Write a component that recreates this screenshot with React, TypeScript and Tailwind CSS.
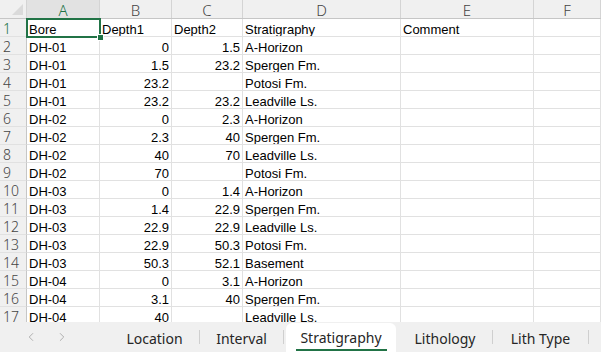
import { ChevronLeft, ChevronRight } from 'lucide-react'

type Row = [string, string, string, string]

const rows: Row[] = [
  ['DH-01', '0', '1.5', 'A-Horizon'],
  ['DH-01', '1.5', '23.2', 'Spergen Fm.'],
  ['DH-01', '23.2', '', 'Potosi Fm.'],
  ['DH-01', '23.2', '23.2', 'Leadville Ls.'],
  ['DH-02', '0', '2.3', 'A-Horizon'],
  ['DH-02', '2.3', '40', 'Spergen Fm.'],
  ['DH-02', '40', '70', 'Leadville Ls.'],
  ['DH-02', '70', '', 'Potosi Fm.'],
  ['DH-03', '0', '1.4', 'A-Horizon'],
  ['DH-03', '1.4', '22.9', 'Spergen Fm.'],
  ['DH-03', '22.9', '22.9', 'Leadville Ls.'],
  ['DH-03', '22.9', '50.3', 'Potosi Fm.'],
  ['DH-03', '50.3', '52.1', 'Basement'],
  ['DH-04', '0', '3.1', 'A-Horizon'],
  ['DH-04', '3.1', '40', 'Spergen Fm.'],
  ['DH-04', '40', '', 'Leadville Ls.'],
]

const cols = [
  { name: 'A', w: 'w-[73px]' },
  { name: 'B', w: 'w-[72px]' },
  { name: 'C', w: 'w-[71px]' },
  { name: 'D', w: 'w-[158px]' },
  { name: 'E', w: 'w-[133px]' },
  { name: 'F', w: 'w-[67px]' },
]

const tabs = [
  { name: 'Location', w: 'w-[89px]' },
  { name: 'Interval', w: 'w-[83px]' },
  { name: 'Stratigraphy', w: 'w-[110px]', active: true },
  { name: 'Lithology', w: 'w-[94px]' },
  { name: 'Lith Type', w: 'w-[95px]' },
]

const cell = 'h-[18px] shrink-0 border-r border-b border-[#e1e1e1] px-[2px] leading-[21px] overflow-hidden whitespace-nowrap'

export default function App() {
  const header = ['Bore', 'Depth1', 'Depth2', 'Stratigraphy', 'Comment', '']

  return (
    <div className="w-[601px] h-[352px] overflow-hidden bg-white flex flex-col font-['Liberation_Sans',sans-serif] text-[13px] text-black">
      {/* Grid */}
      <div className="relative h-[322px] overflow-hidden">
        {/* Column headers */}
        <div className="flex h-[19px] bg-[#f0f0f0] border-b border-[#c6c6c6]">
          <div className="w-[27px] shrink-0 border-r border-[#d4d4d4] relative">
            <div className="absolute right-[3px] bottom-[3px] w-0 h-0 border-l-[11px] border-l-transparent border-b-[11px] border-b-[#dadada]" />
          </div>
          {cols.map(c => (
            <div
              key={c.name}
              className={`${c.w} shrink-0 border-r border-[#d4d4d4] text-center leading-[20px] text-[15px] font-light font-['Noto_Sans',sans-serif] ${
                c.name === 'A' ? 'text-[#217346] bg-[#e2e2e2]' : 'text-[#444]'
              }`}
            >
              {c.name}
            </div>
          ))}
        </div>

        {/* Data rows */}
        {[header, ...rows.map(r => [...r, '', ''])].map((r, i) => (
          <div key={i} className="flex">
            <div
              className={`w-[27px] shrink-0 h-[18px] bg-[#f0f0f0] border-r border-[#c6c6c6] border-b border-b-[#e1e1e1] pl-[3px] leading-[20px] text-[14px] font-light font-['Noto_Sans',sans-serif] overflow-hidden ${
                i === 0 ? 'text-[#217346] bg-[#e2e2e2]' : 'text-[#444]'
              }`}
            >
              {i + 1}
            </div>
            {cols.map((c, j) => {
              const v = r[j] ?? ''
              const right = i > 0 && (j === 1 || j === 2)
              return (
                <div key={c.name} className={`${c.w} ${cell} ${right ? 'text-right' : 'text-left'}`}>
                  {v}
                </div>
              )
            })}
          </div>
        ))}

        {/* Selection A1 */}
        <div className="absolute left-[26px] top-[18px] w-[75px] h-[20px] border-2 border-[#217346]" />
        <div className="absolute left-[97px] top-[34px] w-[7px] h-[7px] bg-[#217346] border border-white" />
      </div>

      {/* Sheet tabs */}
      <div className="flex-1 flex items-stretch bg-[#f0f0f0] font-['Noto_Sans',sans-serif] text-[14px] text-[#262626]">
        <div className="w-[110px] shrink-0 flex items-center pl-[24px] gap-[17px] text-[#a6a6a6]">
          <ChevronLeft size={14} strokeWidth={1.5} />
          <ChevronRight size={14} strokeWidth={1.5} />
        </div>
        {tabs.map((t, i) => {
          const next = tabs[i + 1]
          const sep = !t.active && !(next && next.active)
          return (
            <div key={t.name} className="flex items-stretch shrink-0">
              {t.active ? (
                <div className={`${t.w} mt-[1px] mx-[2px] bg-white rounded-t-[6px] flex flex-col items-center pt-[5px]`}>
                  <span className="leading-[20px]">{t.name}</span>
                  <span className="w-[91px] h-[2px] bg-[#217346] mt-[1px]" />
                </div>
              ) : (
                <div className={`${t.w} flex items-center justify-center pt-[2px]`}>{t.name}</div>
              )}
              {sep && <div className="w-px my-[8px] bg-[#cfcfcf]" />}
              {!t.active && next && next.active && <div className="w-px my-[8px] bg-[#cfcfcf]" />}
            </div>
          )
        })}
      </div>
    </div>
  )
}
